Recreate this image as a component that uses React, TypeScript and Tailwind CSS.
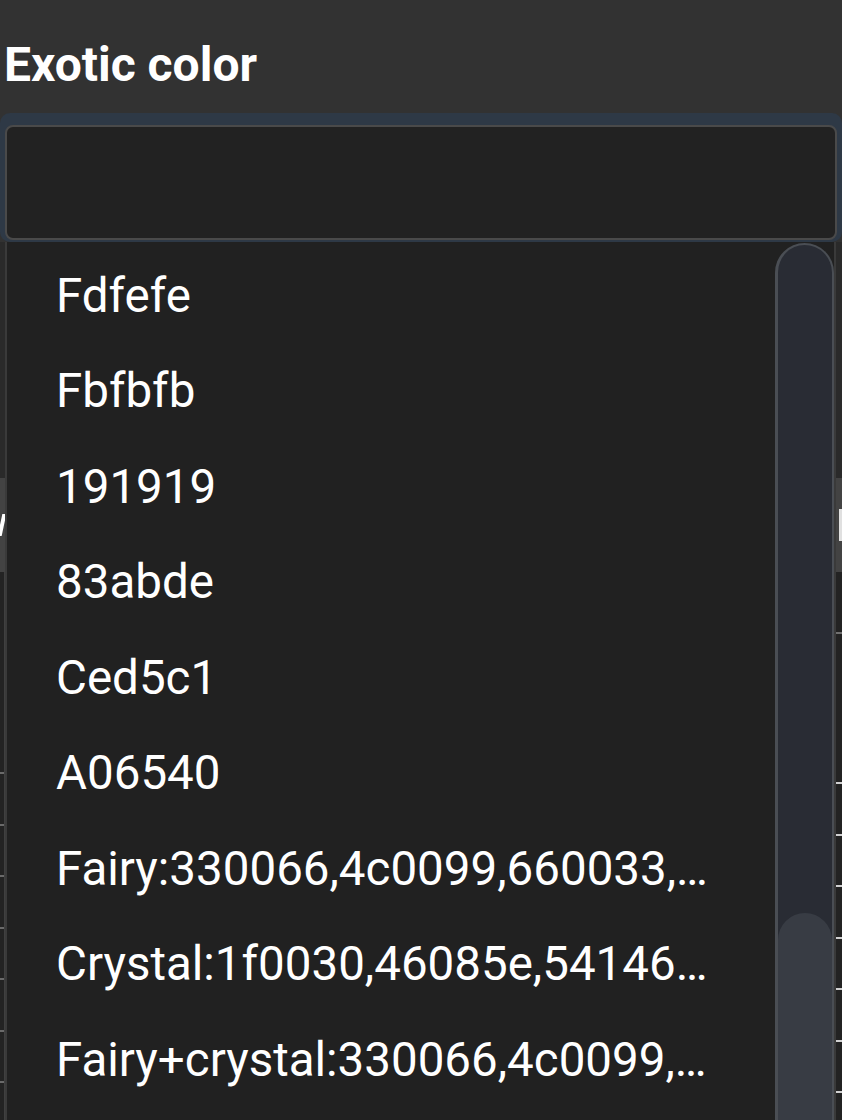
import React from "react";

const items = [
  "Fdfefe",
  "Fbfbfb",
  "191919",
  "83abde",
  "Ced5c1",
  "A06540",
  "Fairy:330066,4c0099,660033,ffccff,cc99ff",
  "Crystal:1f0030,46085e,54146e,662a80,8c54a6",
  "Fairy+crystal:330066,4c0099,660033,1f0030",
];

const leftRows = Array.from({ length: 8 });
const rightRows = Array.from({ length: 9 });

export default function App() {
  return (
    <div className="relative w-[842px] h-[1120px] overflow-hidden bg-[#323232] font-['Roboto','Noto_Sans',sans-serif]">
      {/* page content (mostly hidden behind the open dropdown) */}
      <h1 className="pl-[4px] pt-[37px] text-[48px] leading-[56px] font-bold text-white">
        Exotic color
      </h1>
      <div className="mt-[20px] rounded-[10px] bg-[#2e3946] px-[5px] pt-[12px] pb-[2px]">
        <div className="h-[115px] rounded-[8px] border-2 border-[#4a4a4a] bg-[#222222]" />
      </div>
      <div className="h-[236px] bg-[#2a2a2a]" />
      <div className="flex h-[94px] items-center justify-between bg-[#434343]">
        <div className="h-[22px] w-[4px] -skew-x-12 bg-white" />
        <div className="h-[32px] w-[3px] bg-[#e0e0e0]" />
      </div>
      <div className="flex justify-between bg-[#232323]">
        <div className="flex w-[6px] flex-col border-r-2 border-[#404040] pt-[200px]">
          {leftRows.map((_, i) => (
            <div key={i} className="h-[51.5px] border-t-2 border-[#6a6a6a]" />
          ))}
        </div>
        <div className="flex w-[8px] flex-col border-l-2 border-[#404040] pt-[60px]">
          <div className="h-[150px] border-t-2 border-[#707070]" />
          {rightRows.map((_, i) => (
            <div key={i} className="h-[51.5px] border-t-2 border-[#d0d0d0]" />
          ))}
        </div>
      </div>

      {/* open dropdown overlay */}
      <div className="absolute left-[5px] right-[6px] top-[242px] bottom-0 flex border-x-2 border-[#3a3a3a] bg-[#212121]">
        <ul className="min-w-0 flex-1 pt-[6.5px] pl-[49px] pr-[58px] text-white">
          {items.map((t) => (
            <li
              key={t}
              className="h-[95.5px] truncate text-[47.5px] leading-[95.5px]"
            >
              {t}
            </li>
          ))}
        </ul>
        <div className="relative mt-[1px] w-[59px] shrink-0 rounded-t-full border-l-[3px] border-r-[2px] border-t-[2px] border-[#4a4e54] bg-[#292c34]">
          <div className="absolute left-0 right-0 top-[668px] bottom-0 rounded-t-full bg-[#383c44]" />
        </div>
      </div>
    </div>
  );
}
